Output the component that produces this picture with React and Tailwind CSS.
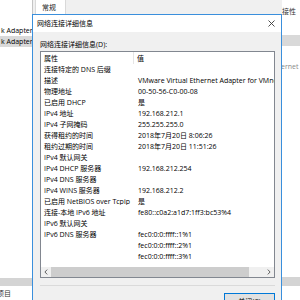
export default function App() {
  const rows = [
    ["连接特定的 DNS 后缀", ""],
    ["描述", "VMware Virtual Ethernet Adapter for VMnet8"],
    ["物理地址", "00-50-56-C0-00-08"],
    ["已启用 DHCP", "是"],
    ["IPv4 地址", "192.168.212.1"],
    ["IPv4 子网掩码", "255.255.255.0"],
    ["获得租约的时间", "2018年7月20日 8:06:26"],
    ["租约过期的时间", "2018年7月20日 11:51:26"],
    ["IPv4 默认网关", ""],
    ["IPv4 DHCP 服务器", "192.168.212.254"],
    ["IPv4 DNS 服务器", ""],
    ["IPv4 WINS 服务器", "192.168.212.2"],
    ["已启用 NetBIOS over Tcpip", "是"],
    ["连接-本地 IPv6 地址", "fe80::c0a2:a1d7:1ff3:bc53%4"],
    ["IPv6 默认网关", ""],
    ["IPv6 DNS 服务器", "fec0:0:0:ffff::1%1"],
    ["", "fec0:0:0:ffff::2%1"],
    ["", "fec0:0:0:ffff::3%1"],
  ];
  return (
    <div className="relative w-[300px] h-[300px] overflow-hidden bg-white text-[7px] leading-none text-black font-['Open_Sans','Noto_Sans_CJK_SC',sans-serif]">
      {/* background windows */}
      <div className="flex h-full">
        <div className="w-[32px] flex flex-col bg-white overflow-hidden">
          <div className="h-[24px]" />
          <div className="h-[12px] flex items-center pl-[1px] whitespace-nowrap">k Adapter</div>
          <div className="h-[11px] flex items-center pl-[1px] whitespace-nowrap bg-[#d9d9d9]">k Adapter</div>
          <div className="flex-1" />
          <div className="h-[8px] bg-[#d4d4d4]" />
          <div className="h-[14px] flex items-center whitespace-nowrap text-[#333] -ml-[3px]">项目</div>
        </div>
        <div className="w-[250px] flex flex-col">
          <div className="h-[14px] bg-[#f0f0f0] border-l border-[#c4c4c4] flex items-end pl-[2px]">
            <div className="h-[14px] w-[31px] bg-white border-x border-[#d9d9d9] flex items-center pl-[6px] text-[#222]">常规</div>
          </div>
          <div className="flex-1 bg-[#f0f0f0]" />
        </div>
        <div className="flex-1 flex flex-col bg-white overflow-hidden">
          <div className="h-[7px]" />
          <div className="h-[8px] flex items-center whitespace-nowrap text-[#333]">接性</div>
          <div className="h-[20px]" />
          <div className="h-[11px] bg-[#d9d9d9]" />
          <div className="h-[16px]" />
          <div className="h-[8px] flex items-center whitespace-nowrap text-[#8a8a8a] -ml-[1px]">ernet</div>
          <div className="flex-1" />
          <div className="h-[9px] bg-[#d4d4d4]" />
          <div className="h-[14px]" />
        </div>
      </div>

      {/* dialog */}
      <div className="absolute left-[32px] top-[14px] w-[250px] h-[300px] border border-[#3a8fdc] bg-[#f0f0f0] flex flex-col">
        <div className="h-[17px] bg-white flex items-center justify-between pl-[4px] pr-[6px]">
          <span>网络连接详细信息</span>
          <svg width="7" height="7" viewBox="0 0 7 7" className="block">
            <path d="M0.5 0.5 L6.5 6.5 M6.5 0.5 L0.5 6.5" stroke="#3a3a3a" strokeWidth="0.9" fill="none" />
          </svg>
        </div>
        <div className="flex flex-col pt-[8px]">
          <div className="h-[8px] flex items-center pl-[7px]">网络连接详细信息(D):</div>
          <div className="mt-[3px] ml-[7px] w-[235px] h-[227px] border border-[#828790] bg-white flex flex-col overflow-hidden">
            <div className="h-[12px] flex shrink-0">
              <div className="w-[93px] pl-[3px] flex items-center border-r border-[#e5e5e5]">属性</div>
              <div className="pl-[3px] flex items-center">值</div>
            </div>
            <div className="flex-1 overflow-hidden">
              {rows.map((r, i) => (
                <div key={i} className="h-[11px] flex items-center whitespace-nowrap">
                  <div className="w-[93px] shrink-0 pl-[3px] overflow-hidden">{r[0]}</div>
                  <div className="pl-[4px]">{r[1]}</div>
                </div>
              ))}
            </div>
            <div className="h-[10px] shrink-0 flex bg-[#f0f0f0]">
              <div className="w-[10px] flex items-center justify-center">
                <svg width="4" height="6" viewBox="0 0 4 6" className="block">
                  <path d="M3.2 0.6 L0.9 3 L3.2 5.4" stroke="#606060" strokeWidth="1" fill="none" />
                </svg>
              </div>
              <div className="w-[198px] bg-[#cdcdcd]" />
              <div className="flex-1" />
              <div className="w-[10px] flex items-center justify-center">
                <svg width="4" height="6" viewBox="0 0 4 6" className="block">
                  <path d="M0.8 0.6 L3.1 3 L0.8 5.4" stroke="#606060" strokeWidth="1" fill="none" />
                </svg>
              </div>
            </div>
          </div>
          <div className="mt-[7px] ml-[7px] w-[235px] h-[1px] bg-[#dadada]" />
          <div className="mt-[7px] self-end mr-[6px] w-[51px] h-[16px] border border-[#0078d7] bg-[#e1e1e1] flex items-center justify-center">关闭(C)</div>
        </div>
      </div>
    </div>
  );
}
